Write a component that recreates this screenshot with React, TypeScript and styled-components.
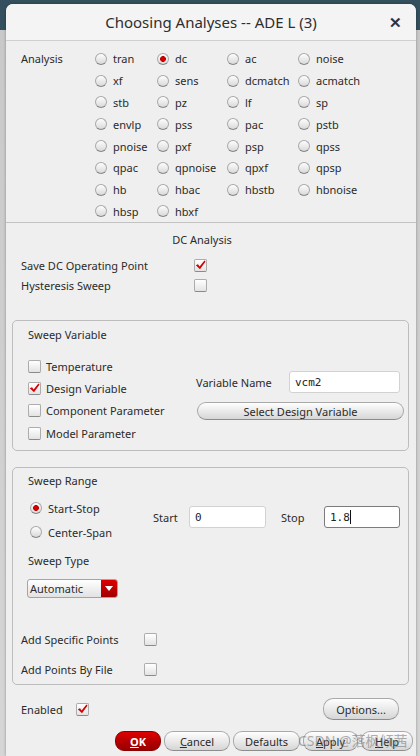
import styled, { createGlobalStyle } from 'styled-components';

const GlobalStyle = createGlobalStyle`
    html, body {
        margin: 0;
        padding: 0;
    }
    body {
        width: 420px;
        height: 756px;
        overflow: hidden;
        background: linear-gradient(to bottom, #34505e 0, #34505e 30px, #c9c9c9 30px, #d6d6d6 100%);
        font-family: "Noto Sans", "Open Sans", sans-serif;
        color: #2b2b2b;
    }
`;

const Dialog = styled.div`
    position: relative;
    margin: 4px 0 0 6px;
    width: 410px;
    height: 752px;
    background: #efefef;
    border-radius: 7px 7px 0 0;
    box-shadow: 0 0 3px rgba(0, 0, 0, 0.35);
    display: flex;
    flex-direction: column;
    font-size: 11px;
`;

const TitleBar = styled.div`
    height: 36px;
    display: grid;
    grid-template-columns: 1fr auto 1fr;
    align-items: center;
    background: #f4f4f4;
    border-radius: 7px 7px 0 0;
    border-bottom: 1px solid #d0d0d0;
`;

const Title = styled.div`
    font-size: 15px;
    color: #2e2e2e;
    grid-column: 2;
`;

const Close = styled.div`
    justify-self: end;
    padding-right: 14px;
    font-size: 15px;
    font-weight: 700;
    color: #333;
`;

const AnalysisSection = styled.div`
    display: flex;
    height: 182px;
    box-sizing: border-box;
    padding: 7px 0 0 15px;
    border-bottom: 1px solid #c2c2c2;
`;

const SideLabel = styled.div`
    width: 74px;
    line-height: 22px;
`;

const RadioGrid = styled.div`
    display: grid;
    grid-template-columns: 62px 70px 71px 80px;
    grid-auto-rows: 21.8px;
`;

const RadioItem = styled.label`
    display: flex;
    align-items: center;
    gap: 6px;
    white-space: nowrap;
`;

const RadioCircle = styled.span<{ $on?: boolean }>`
    width: 12px;
    height: 12px;
    box-sizing: border-box;
    border-radius: 50%;
    border: 1px solid #a9a9a9;
    border-bottom-color: #858585;
    background: ${({ $on }) =>
        $on
            ? 'radial-gradient(circle, #e00000 0, #c00000 2.6px, transparent 3.2px), linear-gradient(#fdfdfd, #dadada)'
            : 'linear-gradient(#fdfdfd, #d9d9d9)'};
    flex: none;
`;

const DcSection = styled.div`
    display: flex;
    flex-direction: column;
    padding-top: 9px;
`;

const SectionTitle = styled.div`
    text-align: center;
    line-height: 16px;
    padding-right: 18px;
`;

const OptionList = styled.div`
    margin-top: 7px;
    padding-left: 15px;
`;

const OptionRow = styled.div<{ $labelWidth: number; $height: number }>`
    display: grid;
    grid-template-columns: ${({ $labelWidth }) => $labelWidth}px 13px;
    align-items: center;
    height: ${({ $height }) => $height}px;
`;

const CheckBox = styled.span`
    width: 13px;
    height: 13px;
    box-sizing: border-box;
    border: 1px solid #acacac;
    border-bottom-color: #8a8a8a;
    border-radius: 2px;
    background: linear-gradient(#ffffff, #e3e3e3);
    display: flex;
    align-items: center;
    justify-content: center;
    flex: none;
`;

const GroupBox = styled.div<{ $top: number }>`
    margin: ${({ $top }) => $top}px 0 0 6px;
    width: 397px;
    box-sizing: border-box;
    border: 1px solid #bdbdbd;
    border-radius: 5px;
    padding: 0 0 0 15px;
`;

const GroupTitle = styled.div<{ $top: number }>`
    line-height: 16px;
    margin-top: ${({ $top }) => $top}px;
`;

const VarBody = styled.div`
    display: flex;
    margin-top: 12px;
    padding-bottom: 6px;
`;

const CheckColumn = styled.div`
    width: 168px;
    flex: none;
`;

const CheckItem = styled.label`
    display: flex;
    align-items: center;
    gap: 5px;
    height: 22.3px;
`;

const RightColumn = styled.div`
    padding-top: 16px;
    display: flex;
    flex-direction: column;
`;

const FieldRow = styled.div`
    display: flex;
    align-items: center;
    height: 22px;
`;

const FieldLabel = styled.span<{ $w: number }>`
    width: ${({ $w }) => $w}px;
    flex: none;
`;

const TextInput = styled.div<{ $w: number; $focus?: boolean }>`
    width: ${({ $w }) => $w}px;
    flex: none;
    height: 22px;
    box-sizing: border-box;
    background: #fff;
    border: 1px solid ${({ $focus }) => ($focus ? '#7c7c7c' : '#d2d2d2')};
    border-radius: 3px;
    padding: 0 5px;
    display: flex;
    align-items: center;
    font-family: "DejaVu Sans Mono", "Liberation Mono", monospace;
    font-size: 11px;
    color: #222;
`;

const Caret = styled.span`
    width: 1px;
    height: 14px;
    background: #111;
`;

const PillButton = styled.div<{ $w: number }>`
    width: ${({ $w }) => $w}px;
    flex: none;
    height: 20px;
    box-sizing: border-box;
    border: 1px solid #a9a9a9;
    border-bottom-color: #8c8c8c;
    border-radius: 9px;
    background: linear-gradient(#fefefe, #e6e6e6 60%, #d6d6d6);
    display: flex;
    align-items: center;
    justify-content: center;
    color: #2b2b2b;
`;

const WideButton = styled(PillButton)`
    margin: 9px 0 0 1px;
    height: 18px;
`;

const RangeBody = styled.div`
    display: flex;
    margin-top: 7px;
`;

const RadioColumn = styled.div`
    width: 123px;
    flex: none;
    margin-left: 2px;
`;

const RangeRadio = styled(RadioItem)`
    height: 24px;
`;

const RangeFields = styled(FieldRow)`
    margin-top: 10px;
`;

const Spacer = styled.span<{ $w: number }>`
    width: ${({ $w }) => $w}px;
    flex: none;
`;

const Dropdown = styled.div`
    margin: 10px 0 0 -1px;
    width: 91px;
    height: 19px;
    box-sizing: border-box;
    border: 1px solid #a4a4a4;
    border-radius: 3px;
    background: linear-gradient(#ffffff, #e2e2e2);
    display: flex;
    overflow: hidden;
`;

const DropText = styled.span`
    flex: 1;
    padding-left: 2px;
    line-height: 17px;
`;

const DropArrow = styled.span`
    width: 16px;
    background: linear-gradient(#dc0000, #a00000);
    display: flex;
    align-items: center;
    justify-content: center;
`;

const PointsList = styled.div`
    margin: 26px 0 0 -7px;
`;

const FooterRow = styled.div`
    display: flex;
    align-items: center;
    justify-content: space-between;
    margin-top: 13px;
    padding: 0 17px 0 15px;
    height: 22px;
`;

const EnabledGroup = styled.div`
    display: flex;
    align-items: center;
`;

const OptionsButton = styled(PillButton)`
    height: 22px;
    border-radius: 10px;
`;

const ButtonBar = styled.div`
    display: flex;
    justify-content: flex-end;
    gap: 3px;
    margin-top: 11px;
    padding-right: 3px;
`;

const ActionButton = styled(PillButton)<{ $primary?: boolean }>`
    height: 20px;
    ${({ $primary }) =>
        $primary &&
        `
        background: linear-gradient(#e00000, #b00000 60%, #9a0000);
        border-color: #8a0000;
        color: #fff;
        font-weight: 700;
    `}
`;

const Mnemonic = styled.span`
    text-decoration: underline;
`;

const Watermark = styled.div`
    position: absolute;
    left: 292px;
    top: 726px;
    font-size: 14px;
    font-family: "Noto Sans", "Noto Sans CJK SC", sans-serif;
    color: rgba(110, 110, 110, 0.55);
    pointer-events: none;
    white-space: nowrap;
`;

function Check() {
    return (
        <svg width="11" height="10" viewBox="0 0 11 10">
            <path d="M0.8 5.2 L3 4.2 L4.6 6.4 L9.4 0.6 L10.6 1.6 L5 9.2 Z" fill="#d60000" />
        </svg>
    );
}

function Box({ checked }: { checked?: boolean }) {
    return <CheckBox>{checked && <Check />}</CheckBox>;
}

const analyses = [
    ['tran', 'dc', 'ac', 'noise'],
    ['xf', 'sens', 'dcmatch', 'acmatch'],
    ['stb', 'pz', 'lf', 'sp'],
    ['envlp', 'pss', 'pac', 'pstb'],
    ['pnoise', 'pxf', 'psp', 'qpss'],
    ['qpac', 'qpnoise', 'qpxf', 'qpsp'],
    ['hb', 'hbac', 'hbstb', 'hbnoise'],
    ['hbsp', 'hbxf'],
];

const sweepVars = [
    { label: 'Temperature', checked: false },
    { label: 'Design Variable', checked: true },
    { label: 'Component Parameter', checked: false },
    { label: 'Model Parameter', checked: false },
];

export default function App() {
    return (
        <>
            <GlobalStyle />
            <Dialog>
                <TitleBar>
                    <Title>Choosing Analyses -- ADE L (3)</Title>
                    <Close>✕</Close>
                </TitleBar>

                <AnalysisSection>
                    <SideLabel>Analysis</SideLabel>
                    <RadioGrid>
                        {analyses.flat().map((name) => (
                            <RadioItem key={name}>
                                <RadioCircle $on={name === 'dc'} />
                                {name}
                            </RadioItem>
                        ))}
                    </RadioGrid>
                </AnalysisSection>

                <DcSection>
                    <SectionTitle>DC Analysis</SectionTitle>
                    <OptionList>
                        <OptionRow $labelWidth={173} $height={20}>
                            <span>Save DC Operating Point</span>
                            <Box checked />
                        </OptionRow>
                        <OptionRow $labelWidth={173} $height={20}>
                            <span>Hysteresis Sweep</span>
                            <Box />
                        </OptionRow>
                    </OptionList>
                </DcSection>

                <GroupBox $top={25}>
                    <GroupTitle $top={6}>Sweep Variable</GroupTitle>
                    <VarBody>
                        <CheckColumn>
                            {sweepVars.map((v) => (
                                <CheckItem key={v.label}>
                                    <Box checked={v.checked} />
                                    {v.label}
                                </CheckItem>
                            ))}
                        </CheckColumn>
                        <RightColumn>
                            <FieldRow>
                                <FieldLabel $w={93}>Variable Name</FieldLabel>
                                <TextInput $w={111}>vcm2</TextInput>
                            </FieldRow>
                            <WideButton $w={207}>Select Design Variable</WideButton>
                        </RightColumn>
                    </VarBody>
                </GroupBox>

                <GroupBox $top={16}>
                    <GroupTitle $top={5}>Sweep Range</GroupTitle>
                    <RangeBody>
                        <RadioColumn>
                            <RangeRadio>
                                <RadioCircle $on />
                                Start-Stop
                            </RangeRadio>
                            <RangeRadio>
                                <RadioCircle />
                                Center-Span
                            </RangeRadio>
                        </RadioColumn>
                        <RangeFields>
                            <FieldLabel $w={36}>Start</FieldLabel>
                            <TextInput $w={77}>0</TextInput>
                            <Spacer $w={15} />
                            <FieldLabel $w={43}>Stop</FieldLabel>
                            <TextInput $w={76} $focus>
                                1.8
                                <Caret />
                            </TextInput>
                        </RangeFields>
                    </RangeBody>
                    <GroupTitle $top={9}>Sweep Type</GroupTitle>
                    <Dropdown>
                        <DropText>Automatic</DropText>
                        <DropArrow>
                            <svg width="8" height="5" viewBox="0 0 8 5">
                                <path d="M0 0 H8 L4 5 Z" fill="#fff" />
                            </svg>
                        </DropArrow>
                    </Dropdown>
                    <PointsList>
                        <OptionRow $labelWidth={123} $height={30}>
                            <span>Add Specific Points</span>
                            <Box />
                        </OptionRow>
                        <OptionRow $labelWidth={123} $height={30}>
                            <span>Add Points By File</span>
                            <Box />
                        </OptionRow>
                    </PointsList>
                </GroupBox>

                <FooterRow>
                    <EnabledGroup>
                        <FieldLabel $w={55}>Enabled</FieldLabel>
                        <Box checked />
                    </EnabledGroup>
                    <OptionsButton $w={76}>Options...</OptionsButton>
                </FooterRow>

                <ButtonBar>
                    <ActionButton $w={46} $primary>
                        <Mnemonic>O</Mnemonic>K
                    </ActionButton>
                    <ActionButton $w={66}>
                        <Mnemonic>C</Mnemonic>ancel
                    </ActionButton>
                    <ActionButton $w={67}>Defaults</ActionButton>
                    <ActionButton $w={55}>
                        <Mnemonic>A</Mnemonic>pply
                    </ActionButton>
                    <ActionButton $w={52}>
                        <Mnemonic>H</Mnemonic>elp
                    </ActionButton>
                </ButtonBar>

                <Watermark>CSDN @落枫倾茜</Watermark>
            </Dialog>
        </>
    );
}
